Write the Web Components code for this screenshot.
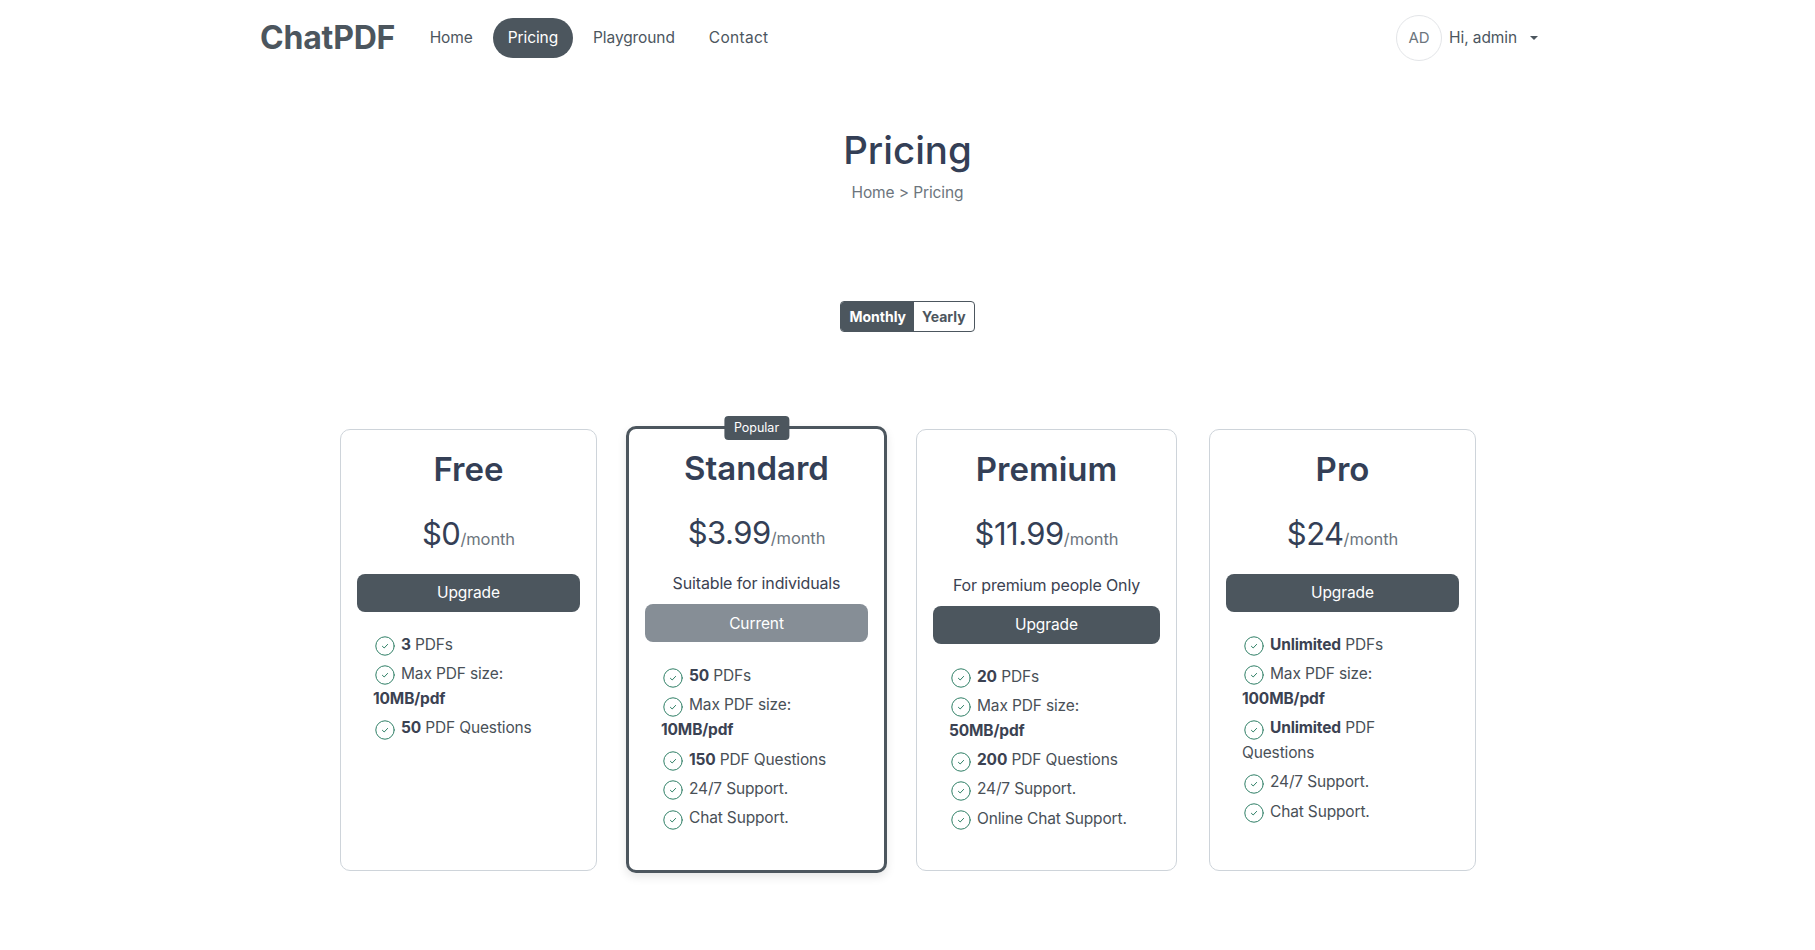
<!DOCTYPE html>
<html lang="en">
<head>
<meta charset="utf-8">
<title>ChatPDF - Pricing</title>
<style>
  html, body { margin: 0; background: #fff; }
  body { font-family: Inter, "Open Sans", sans-serif; color: #3b4252; height: 950px; overflow: hidden; --dark: #4c565e; }
  .plans { display: flex; justify-content: flex-start; align-items: flex-start; padding-left: 340px; margin-top: 0; }
</style>
</head>
<body>
<site-nav></site-nav>
<page-title heading="Pricing"></page-title>
<billing-toggle></billing-toggle>
<div class="plans">
  <price-card name="Free" price="$0" action="Upgrade" style="--w:257px">
    <plan-item><b>3</b> PDFs</plan-item>
    <plan-item>Max PDF size:<br><b>10MB/pdf</b></plan-item>
    <plan-item><b>50</b> PDF Questions</plan-item>
  </price-card>
  <price-card name="Standard" price="$3.99" note="Suitable for individuals" action="Current" current popular style="--w:261px;--gap:29px">
    <plan-item><b>50</b> PDFs</plan-item>
    <plan-item>Max PDF size:<br><b>10MB/pdf</b></plan-item>
    <plan-item><b>150</b> PDF Questions</plan-item>
    <plan-item>24/7 Support.</plan-item>
    <plan-item>Chat Support.</plan-item>
  </price-card>
  <price-card name="Premium" price="$11.99" note="For premium people Only" action="Upgrade" style="--w:261px;--gap:29px">
    <plan-item><b>20</b> PDFs</plan-item>
    <plan-item>Max PDF size:<br><b>50MB/pdf</b></plan-item>
    <plan-item><b>200</b> PDF Questions</plan-item>
    <plan-item>24/7 Support.</plan-item>
    <plan-item>Online Chat Support.</plan-item>
  </price-card>
  <price-card name="Pro" price="$24" action="Upgrade" style="--w:267px;--gap:32px">
    <plan-item><b>Unlimited</b> PDFs</plan-item>
    <plan-item>Max PDF size:<br><b>100MB/pdf</b></plan-item>
    <plan-item><b>Unlimited</b> PDF<br>Questions</plan-item>
    <plan-item>24/7 Support.</plan-item>
    <plan-item>Chat Support.</plan-item>
  </price-card>
</div>

<script>
class SiteNav extends HTMLElement {
  constructor() {
    super();
    this.attachShadow({ mode: "open" });
  }
  connectedCallback() {
    this.shadowRoot.innerHTML = `
      <style>
        :host { display: block; }
        .bar { display: flex; align-items: center; justify-content: space-between; height: 75px; padding: 0 277px 0 260px; }
        .left, .links, .user { display: flex; align-items: center; }
        .logo { font-size: 32px; font-weight: 700; color: var(--dark); letter-spacing: -0.2px; margin-right: 20px; }
        a { font-size: 15.5px; color: var(--dark); text-decoration: none; padding: 0 14.5px; height: 40px; line-height: 40px; border-radius: 20px; margin-right: 5px; letter-spacing: -0.1px; }
        a.active { background: var(--dark); color: #fff; margin-left: 1px; margin-right: 6px; }
        a:last-child { letter-spacing: 0.3px; }
        .avatar { width: 44px; height: 44px; border: 1px solid #e3e5e8; border-radius: 50%; display: flex; align-items: center; justify-content: center; font-size: 15px; color: #6c757d; margin-right: 7px; }
        .hi { font-size: 15.5px; color: var(--dark); letter-spacing: -0.1px; }
        .caret { width: 0; height: 0; border: 4px solid transparent; border-top-color: var(--dark); border-bottom: 0; margin-left: 13px; }
      </style>
      <nav class="bar">
        <div class="left">
          <div class="logo">ChatPDF</div>
          <div class="links">
            <a href="#">Home</a>
            <a href="#" class="active">Pricing</a>
            <a href="#">Playground</a>
            <a href="#">Contact</a>
          </div>
        </div>
        <div class="user">
          <div class="avatar">AD</div>
          <span class="hi">Hi, admin</span>
          <span class="caret"></span>
        </div>
      </nav>
    `;
  }
}

class PageTitle extends HTMLElement {
  constructor() {
    super();
    this.attachShadow({ mode: "open" });
  }
  connectedCallback() {
    const heading = this.getAttribute("heading");
    this.shadowRoot.innerHTML = `
      <style>
        :host { display: block; text-align: center; padding-top: 50px; }
        h1 { margin: 0; font-size: 38.5px; line-height: 50px; font-weight: 500; color: #343f56; }
        p { margin: 6px 0 0; font-size: 15.5px; line-height: 24px; color: #6c757d; letter-spacing: -0.1px; }
      </style>
      <h1>${heading}</h1>
      <p>Home &gt; ${heading}</p>
    `;
  }
}

class BillingToggle extends HTMLElement {
  constructor() {
    super();
    this.attachShadow({ mode: "open" });
  }
  connectedCallback() {
    this.shadowRoot.innerHTML = `
      <style>
        :host { display: flex; justify-content: center; padding-top: 96px; margin-bottom: 97px; }
        .group { display: flex; height: 31px; box-sizing: border-box; border: 1px solid var(--dark); border-radius: 4px; overflow: hidden; font-size: 14px; font-weight: 700; line-height: 29px; }
        span { padding: 0 8px; color: var(--dark); }
        .on { background: var(--dark); color: #fff; }
      </style>
      <div class="group">
        <span class="on">Monthly</span>
        <span>Yearly</span>
      </div>
    `;
  }
}

class PriceCard extends HTMLElement {
  constructor() {
    super();
    this.attachShadow({ mode: "open" });
  }
  connectedCallback() {
    const name = this.getAttribute("name");
    const price = this.getAttribute("price");
    const note = this.getAttribute("note");
    const action = this.getAttribute("action");
    const popular = this.hasAttribute("popular");
    const current = this.hasAttribute("current");
    this.shadowRoot.innerHTML = `
      <style>
        :host { display: block; width: var(--w); margin-left: var(--gap, 0); box-sizing: border-box; }
        .card { position: relative; box-sizing: border-box; height: 442px; border: 1px solid #ced4da; border-radius: 10px; padding: 16px; background: #fff; }
        .card.popular { height: 447px; margin-top: -3px; border: 3px solid var(--dark); box-shadow: 0 4px 10px rgba(0,0,0,.1); padding: 15.5px 16px 14px; }
        .badge { position: absolute; top: -13px; left: 50%; transform: translateX(-50%); background: var(--dark); color: #fff; font-size: 12.5px; line-height: 24px; padding: 0 10px; border-radius: 4px; white-space: nowrap; }
        h2 { margin: 0; padding-top: 3px; text-align: center; font-size: 33px; line-height: 40px; font-weight: 600; color: #343f56; }
        .price { margin-top: 22px; text-align: center; font-size: 31px; line-height: 46px; color: #343f56; letter-spacing: -0.5px; }
        .price small { font-size: 16.5px; color: #6c757d; letter-spacing: -0.1px; }
        .note { margin-top: 10.5px; text-align: center; font-size: 16px; line-height: 24px; color: #3b4252; letter-spacing: -0.15px; }
        button { display: block; width: 100%; height: 38px; margin-top: 11.5px; border: 0; border-radius: 8px; background: var(--dark); color: #fff; font: inherit; font-size: 15.5px; letter-spacing: -0.1px; }
        .note + button { margin-top: 9px; }
        button.current { background: #868e96; }
        ul { margin: 0; padding: 20px 0 0 16px; list-style: none; }
        .popular ul { padding-top: 21px; }
      </style>
      <div class="card ${popular ? "popular" : ""}">
        ${popular ? `<div class="badge">Popular</div>` : ""}
        <h2>${name}</h2>
        <div class="price">${price}<small>/month</small></div>
        ${note ? `<div class="note">${note}</div>` : ""}
        <button class="${current ? "current" : ""}">${action}</button>
        <ul><slot></slot></ul>
      </div>
    `;
  }
}

class PlanItem extends HTMLElement {
  constructor() {
    super();
    this.attachShadow({ mode: "open" });
  }
  connectedCallback() {
    this.shadowRoot.innerHTML = `
      <style>
        :host { display: block; font-size: 15.5px; line-height: 25px; color: #495057; margin-bottom: 4.3px; letter-spacing: -0.15px; }
        ::slotted(b) { font-weight: 700; color: #3b4252; }
        svg { width: 20px; height: 20px; vertical-align: -6.5px; margin: 0 6px 0 2px; }
      </style>
      <svg viewBox="0 0 20 20" fill="none" stroke="#2f7f66" stroke-linecap="round" stroke-linejoin="round">
        <circle cx="10" cy="10" r="9.2" stroke-width="1"/>
        <path d="M7.4 10.3l1.8 1.7 3.4-3.6" stroke-width="1"/>
      </svg><slot></slot>
    `;
  }
}

customElements.define("site-nav", SiteNav);
customElements.define("page-title", PageTitle);
customElements.define("billing-toggle", BillingToggle);
customElements.define("price-card", PriceCard);
customElements.define("plan-item", PlanItem);
</script>
</body>
</html>
